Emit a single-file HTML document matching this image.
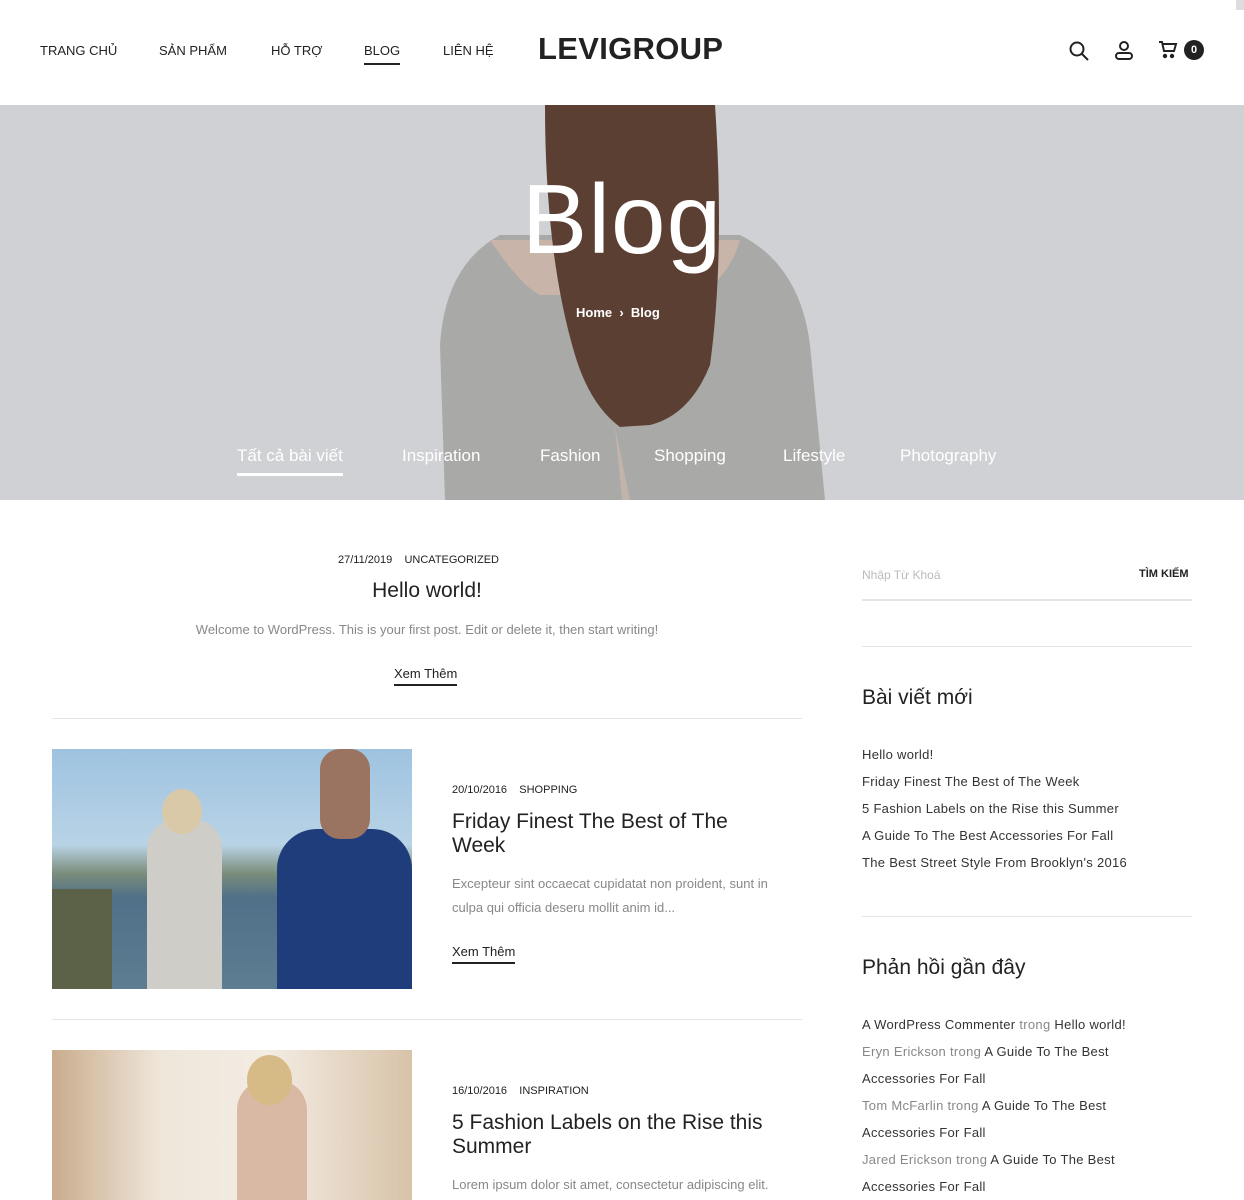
<!DOCTYPE html>
<html><head><meta charset="utf-8"><style>
*{margin:0;padding:0;box-sizing:border-box}
body{width:1244px;height:1200px;overflow:hidden;background:#fff;font-family:"Liberation Sans",sans-serif;color:#222;position:relative}
.a{position:absolute;white-space:nowrap}
.nav{font-size:13px;color:#222;top:43px}
.hero{position:absolute;left:0;top:105px;width:1244px;height:395px;background:#d0d1d4;overflow:hidden}
.cat{position:absolute;top:341px;font-size:17px;color:#fff}
.meta{font-size:11px;color:#222}
.t{font-size:21px;color:#222}
.p{font-size:13px;color:#888;line-height:24px}
.more{font-size:13px;color:#222;border-bottom:2px solid #222;padding-bottom:3px}
.sl{font-size:13px;color:#333;letter-spacing:0.3px}
.g{color:#888}
.hr{position:absolute;height:1px;background:#e6e6e6}
</style></head><body>
<div class="a nav" style="left:40px">TRANG CHỦ</div>
<div class="a nav" style="left:159px">SẢN PHẨM</div>
<div class="a nav" style="left:271px">HỖ TRỢ</div>
<div class="a nav" style="left:364px;border-bottom:2px solid #222;padding-bottom:5px">BLOG</div>
<div class="a nav" style="left:443px">LIÊN HỆ</div>
<div class="a" style="left:538px;top:31px;font-size:31px;font-weight:bold;letter-spacing:0.3px">LEVIGROUP</div>
<svg class="a" style="left:1068px;top:40px" width="22" height="22" viewBox="0 0 22 22" fill="none" stroke="#222" stroke-width="2"><circle cx="9" cy="9" r="6.5"/><path d="M14 14l6 6"/></svg>
<svg class="a" style="left:1114px;top:40px" width="20" height="20" viewBox="0 0 20 20" fill="none" stroke="#222" stroke-width="2"><circle cx="10" cy="6" r="4"/><rect x="2" y="13" width="16" height="6" rx="3"/></svg>
<svg class="a" style="left:1158px;top:41px" width="20" height="18" viewBox="0 0 20 18" fill="none" stroke="#222" stroke-width="2"><path d="M1 1h3l2 9h10l2-7H5"/><circle cx="7" cy="15" r="1.2" fill="#222"/><circle cx="14" cy="15" r="1.2" fill="#222"/></svg>
<div class="a" style="left:1184px;top:40px;width:20px;height:20px;border-radius:50%;background:#222;color:#fff;font-size:11px;font-weight:bold;text-align:center;line-height:20px">0</div>
<div class="a" style="left:1236px;top:0;width:8px;height:10px;background:#ddd"></div>

<div class="hero">
<svg width="1244" height="395" style="position:absolute;left:0;top:0">
<path d="M445 395 L440 240 Q445 160 500 130 L740 130 Q800 160 810 240 L825 395Z" fill="#a9a9a8"/>
<path d="M490 135 Q520 180 540 190 L700 190 Q730 170 740 135Z" fill="#c8b4a8"/>
<path d="M545 0 L715 0 Q725 150 710 260 Q690 310 650 320 L620 322 Q590 300 575 250 Q545 150 545 0Z" fill="#5c3f33"/>
<path d="M615 322 L630 395 L622 395Z" fill="#c2b4aa"/>
</svg>
<div class="a" style="left:0;width:1244px;text-align:center;top:58px;font-size:98px;color:#fff;letter-spacing:1px">Blog</div>
<div class="a" style="left:576px;top:200px;font-size:13px;color:#fff;font-weight:bold">Home &nbsp;›&nbsp; Blog</div>
<div class="cat" style="left:237px;border-bottom:3px solid #fff;padding-bottom:7px">Tất cả bài viết</div>
<div class="cat" style="left:402px">Inspiration</div>
<div class="cat" style="left:540px">Fashion</div>
<div class="cat" style="left:654px">Shopping</div>
<div class="cat" style="left:783px">Lifestyle</div>
<div class="cat" style="left:900px">Photography</div>
</div>

<div class="a meta" style="left:338px;top:554px">27/11/2019 &nbsp;&nbsp; UNCATEGORIZED</div>
<div class="a t" style="left:0;width:854px;text-align:center;top:579px">Hello world!</div>
<div class="a p" style="left:0;width:854px;text-align:center;top:618px">Welcome to WordPress. This is your first post. Edit or delete it, then start writing!</div>
<div class="a more" style="left:394px;top:666px">Xem Thêm</div>
<div class="hr" style="left:52px;top:718px;width:750px"></div>

<div class="a" style="left:52px;top:749px;width:360px;height:240px;background:linear-gradient(180deg,#9ec3e0 0%,#b9d3e6 40%,#7a8c7a 52%,#4f7088 62%,#5d7d92 100%);overflow:hidden">
<div style="position:absolute;left:95px;top:70px;width:75px;height:170px;background:#cfcdc8;border-radius:30px 30px 0 0"></div>
<div style="position:absolute;left:110px;top:40px;width:40px;height:45px;background:#d9c9a8;border-radius:50%"></div>
<div style="position:absolute;left:225px;top:80px;width:135px;height:160px;background:#1f3d7a;border-radius:40px 40px 0 0"></div>
<div style="position:absolute;left:268px;top:0;width:50px;height:90px;background:#9a7460;border-radius:20px"></div>
<div style="position:absolute;left:0;top:140px;width:60px;height:100px;background:#5b6248"></div>
</div>
<div class="a meta" style="left:452px;top:784px">20/10/2016 &nbsp;&nbsp; SHOPPING</div>
<div class="a t" style="left:452px;top:810px;line-height:24px">Friday Finest The Best of The<br>Week</div>
<div class="a p" style="left:452px;top:872px">Excepteur sint occaecat cupidatat non proident, sunt in<br>culpa qui officia deseru mollit anim id...</div>
<div class="a more" style="left:452px;top:944px">Xem Thêm</div>
<div class="hr" style="left:52px;top:1019px;width:750px"></div>

<div class="a" style="left:52px;top:1050px;width:360px;height:150px;background:linear-gradient(90deg,#c9ac8c 0%,#efe6da 30%,#f3ece3 60%,#d8c3a9 100%);overflow:hidden">
<div style="position:absolute;left:185px;top:30px;width:70px;height:130px;background:#d9b8a4;border-radius:30px 30px 0 0"></div>
<div style="position:absolute;left:195px;top:5px;width:45px;height:50px;background:#d7bb86;border-radius:50%"></div>
</div>
<div class="a meta" style="left:452px;top:1085px">16/10/2016 &nbsp;&nbsp; INSPIRATION</div>
<div class="a t" style="left:452px;top:1111px;line-height:24px">5 Fashion Labels on the Rise this<br>Summer</div>
<div class="a p" style="left:452px;top:1173px">Lorem ipsum dolor sit amet, consectetur adipiscing elit.</div>

<div class="a" style="left:862px;top:568px;font-size:12px;color:#bbb">Nhập Từ Khoá</div>
<div class="a" style="left:1139px;top:568px;font-size:11px;color:#222;font-weight:bold">TÌM KIẾM</div>
<div class="hr" style="left:862px;top:599px;width:330px;height:2px"></div>
<div class="hr" style="left:862px;top:646px;width:330px"></div>
<div class="a" style="left:862px;top:686px;font-size:21px">Bài viết mới</div>
<div class="a sl" style="left:862px;top:741px;line-height:27px">Hello world!<br>Friday Finest The Best of The Week<br>5 Fashion Labels on the Rise this Summer<br>A Guide To The Best Accessories For Fall<br>The Best Street Style From Brooklyn's 2016</div>
<div class="hr" style="left:862px;top:916px;width:330px"></div>
<div class="a" style="left:862px;top:956px;font-size:21px">Phản hồi gần đây</div>
<div class="a sl" style="left:862px;top:1011px;line-height:27px">A WordPress Commenter <span class="g">trong</span> Hello world!<br><span class="g">Eryn Erickson trong</span> A Guide To The Best<br>Accessories For Fall<br><span class="g">Tom McFarlin trong</span> A Guide To The Best<br>Accessories For Fall<br><span class="g">Jared Erickson trong</span> A Guide To The Best<br>Accessories For Fall</div>
</body></html>
